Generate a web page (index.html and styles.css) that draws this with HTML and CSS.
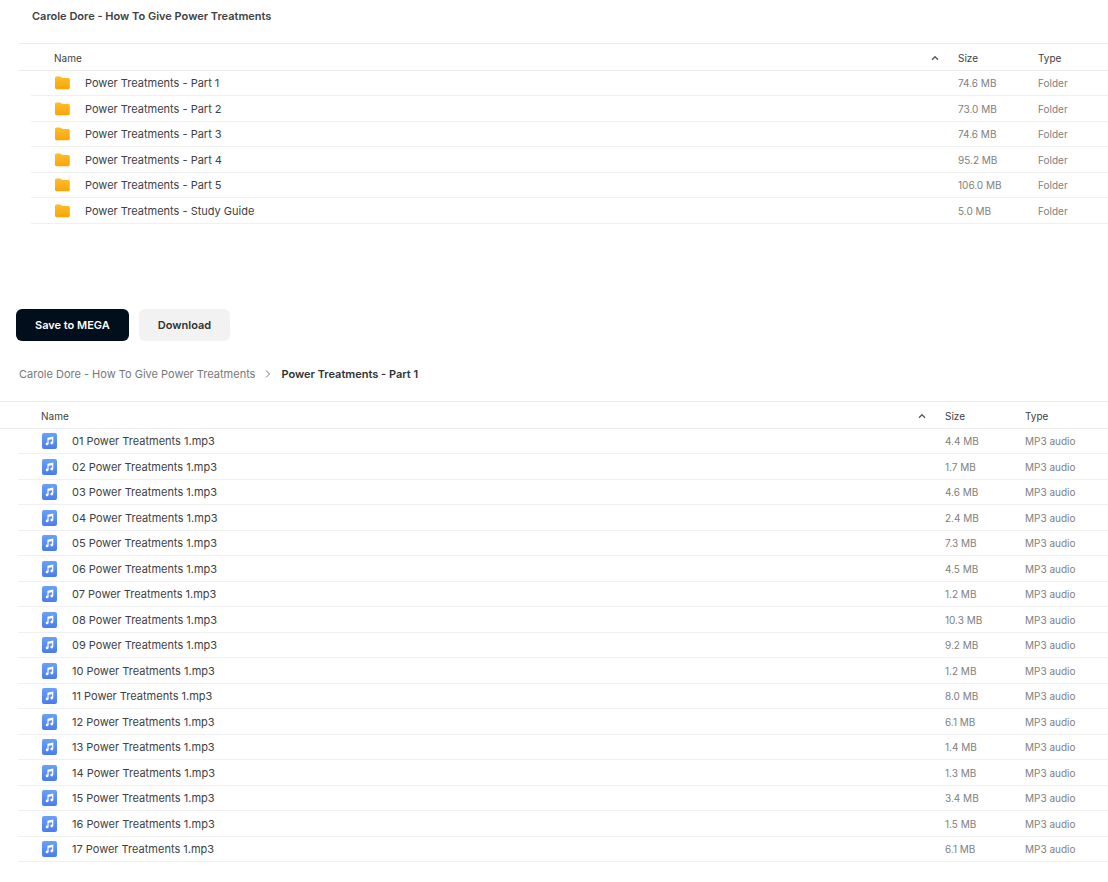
FILE: index.html
```html
<!DOCTYPE html>
<html lang="en">
<head>
    <meta charset="UTF-8">
    <meta name="viewport" content="width=device-width, initial-scale=1.0">
    <title>Carole Dore - How To Give Power Treatments</title>
    <link rel="stylesheet" href="styles.css">
</head>
<body>
    <svg class="sprite" aria-hidden="true">
        <defs>
            <linearGradient id="folder-fill" x1="0" y1="0" x2="0" y2="1">
                <stop offset="0" stop-color="#ffbd2b"/>
                <stop offset="1" stop-color="#fba40b"/>
            </linearGradient>
            <linearGradient id="audio-fill" x1="0" y1="0" x2="0" y2="1">
                <stop offset="0" stop-color="#69a1f6"/>
                <stop offset="1" stop-color="#4a7cec"/>
            </linearGradient>
        </defs>
        <symbol id="folder" viewBox="0 0 16 16">
            <path fill="url(#folder-fill)" d="M0 3.200C0 2.200.7 1.500 1.600 1.500h3.200c.6 0 .9.2 1.300.6l.5.5c.2.2.5.3.8.3h5.800c.9 0 1.600.6 1.600 1.600v8.100c0 .9-.7 1.600-1.600 1.600H1.600C.7 14.200 0 13.500 0 12.600z"/>
        </symbol>
        <symbol id="audio" viewBox="0 0 16 16">
            <rect width="15" height="16" rx="2" fill="url(#audio-fill)"/>
            <path fill="none" stroke="#fff" stroke-width="1.200" d="M6 10.800V5.200l4.700-1v5.700M6 6.300l4.700-1"/>
            <circle cx="5.100" cy="10.900" r="1.400" fill="#fff"/>
            <circle cx="9.800" cy="10" r="1.400" fill="#fff"/>
        </symbol>
        <symbol id="sort" viewBox="0 0 8 8">
            <path fill="none" stroke="#555" stroke-width="1.300" d="M1 5.700 4 2.700 7 5.700"/>
        </symbol>
    </svg>

    <section class="folder-view root-folder">
        <h1 class="folder-title">Carole Dore - How To Give Power Treatments</h1>
        <table class="file-list">
            <thead>
                <tr>
                    <th scope="col"><div class="name-head">Name <svg class="sort"><use href="#sort"/></svg></div></th>
                    <th scope="col" class="size">Size</th>
                    <th scope="col" class="type">Type</th>
                </tr>
            </thead>
            <tbody>
                <tr><td><div class="item"><svg class="icon"><use href="#folder"/></svg>Power Treatments - Part 1</div></td><td>74.6 MB</td><td>Folder</td></tr>
                <tr><td><div class="item"><svg class="icon"><use href="#folder"/></svg>Power Treatments - Part 2</div></td><td>73.0 MB</td><td>Folder</td></tr>
                <tr><td><div class="item"><svg class="icon"><use href="#folder"/></svg>Power Treatments - Part 3</div></td><td>74.6 MB</td><td>Folder</td></tr>
                <tr><td><div class="item"><svg class="icon"><use href="#folder"/></svg>Power Treatments - Part 4</div></td><td>95.2 MB</td><td>Folder</td></tr>
                <tr><td><div class="item"><svg class="icon"><use href="#folder"/></svg>Power Treatments - Part 5</div></td><td>106.0 MB</td><td>Folder</td></tr>
                <tr><td><div class="item"><svg class="icon"><use href="#folder"/></svg>Power Treatments - Study Guide</div></td><td>5.0 MB</td><td>Folder</td></tr>
            </tbody>
        </table>
    </section>

    <section class="folder-view sub-folder">
        <div class="actions">
            <button type="button" class="btn btn-primary">Save to MEGA</button>
            <button type="button" class="btn">Download</button>
        </div>
        <nav class="breadcrumb">
            <a href="#">Carole Dore - How To Give Power Treatments</a>
            <svg class="chevron" viewBox="0 0 8 8"><path fill="none" stroke="#777" d="M2 .5 5.500 4 2 7.500"/></svg>
            <span class="current">Power Treatments - Part 1</span>
        </nav>
        <table class="file-list">
            <thead>
                <tr>
                    <th scope="col"><div class="name-head">Name <svg class="sort"><use href="#sort"/></svg></div></th>
                    <th scope="col" class="size">Size</th>
                    <th scope="col" class="type">Type</th>
                </tr>
            </thead>
            <tbody>
                <tr><td><div class="item"><svg class="icon"><use href="#audio"/></svg>01 Power Treatments 1.mp3</div></td><td>4.4 MB</td><td>MP3 audio</td></tr>
                <tr><td><div class="item"><svg class="icon"><use href="#audio"/></svg>02 Power Treatments 1.mp3</div></td><td>1.7 MB</td><td>MP3 audio</td></tr>
                <tr><td><div class="item"><svg class="icon"><use href="#audio"/></svg>03 Power Treatments 1.mp3</div></td><td>4.6 MB</td><td>MP3 audio</td></tr>
                <tr><td><div class="item"><svg class="icon"><use href="#audio"/></svg>04 Power Treatments 1.mp3</div></td><td>2.4 MB</td><td>MP3 audio</td></tr>
                <tr><td><div class="item"><svg class="icon"><use href="#audio"/></svg>05 Power Treatments 1.mp3</div></td><td>7.3 MB</td><td>MP3 audio</td></tr>
                <tr><td><div class="item"><svg class="icon"><use href="#audio"/></svg>06 Power Treatments 1.mp3</div></td><td>4.5 MB</td><td>MP3 audio</td></tr>
                <tr><td><div class="item"><svg class="icon"><use href="#audio"/></svg>07 Power Treatments 1.mp3</div></td><td>1.2 MB</td><td>MP3 audio</td></tr>
                <tr><td><div class="item"><svg class="icon"><use href="#audio"/></svg>08 Power Treatments 1.mp3</div></td><td>10.3 MB</td><td>MP3 audio</td></tr>
                <tr><td><div class="item"><svg class="icon"><use href="#audio"/></svg>09 Power Treatments 1.mp3</div></td><td>9.2 MB</td><td>MP3 audio</td></tr>
                <tr><td><div class="item"><svg class="icon"><use href="#audio"/></svg>10 Power Treatments 1.mp3</div></td><td>1.2 MB</td><td>MP3 audio</td></tr>
                <tr><td><div class="item"><svg class="icon"><use href="#audio"/></svg>11 Power Treatments 1.mp3</div></td><td>8.0 MB</td><td>MP3 audio</td></tr>
                <tr><td><div class="item"><svg class="icon"><use href="#audio"/></svg>12 Power Treatments 1.mp3</div></td><td>6.1 MB</td><td>MP3 audio</td></tr>
                <tr><td><div class="item"><svg class="icon"><use href="#audio"/></svg>13 Power Treatments 1.mp3</div></td><td>1.4 MB</td><td>MP3 audio</td></tr>
                <tr><td><div class="item"><svg class="icon"><use href="#audio"/></svg>14 Power Treatments 1.mp3</div></td><td>1.3 MB</td><td>MP3 audio</td></tr>
                <tr><td><div class="item"><svg class="icon"><use href="#audio"/></svg>15 Power Treatments 1.mp3</div></td><td>3.4 MB</td><td>MP3 audio</td></tr>
                <tr><td><div class="item"><svg class="icon"><use href="#audio"/></svg>16 Power Treatments 1.mp3</div></td><td>1.5 MB</td><td>MP3 audio</td></tr>
                <tr><td><div class="item"><svg class="icon"><use href="#audio"/></svg>17 Power Treatments 1.mp3</div></td><td>6.1 MB</td><td>MP3 audio</td></tr>
            </tbody>
        </table>
    </section>
</body>
</html>
```
FILE: styles.css
```css
* {
    box-sizing: border-box;
}

body {
    margin: 0;
    background-color: #fff;
    color: #404144;
    font-family: Inter, "Liberation Sans", sans-serif;
    font-size: 11px;
    line-height: 16px;
}

.sprite {
    position: absolute;
    width: 0;
    height: 0;
}

.root-folder {
    --inset: 12px;
    --type-width: 70px;
    padding: 8px 0 0 19px;
}

.sub-folder {
    --inset: 18px;
    --type-width: 83px;
    padding-top: 85px;
}

.folder-title {
    margin: 0 0 19px 13px;
    font-size: 11px;
    font-weight: 600;
}

/* file tables */
.file-list {
    width: 100%;
    table-layout: fixed;
    border-collapse: separate;
    border-spacing: 0;
}

.file-list th {
    height: 28px;
    padding: 2px 0 0;
    border-top: 1px solid #ebebeb;
    border-bottom: 1px solid #ebebeb;
    font-size: 10px;
    font-weight: 400;
    text-align: left;
}

.file-list .size {
    width: 80px;
}

.file-list .type {
    width: var(--type-width);
}

.file-list td {
    padding: 0;
    border-bottom: 1px solid #f0f0f0;
    color: #808080;
    font-size: 10px;
}

.file-list td:first-child {
    border-bottom: 0;
}

.name-head {
    display: flex;
    align-items: center;
    justify-content: space-between;
    margin-left: var(--inset);
    padding: 0 19px 0 23px;
}

.sort {
    width: 8px;
    height: 8px;
}

.item {
    display: flex;
    align-items: center;
    gap: 14px;
    height: 25px;
    margin-left: var(--inset);
    padding-left: 24px;
    border-bottom: 1px solid #f0f0f0;
    color: #404144;
    font-size: 11px;
}

tr:nth-child(even) .item {
    height: 26px;
}

.icon {
    width: 16px;
    height: 16px;
}

/* buttons and path */
.actions {
    display: flex;
    gap: 10px;
    padding-left: 16px;
}

.btn {
    height: 32px;
    padding: 0 19px;
    border: 0;
    border-radius: 6px;
    background-color: #f2f2f2;
    color: #303233;
    font-family: inherit;
    font-size: 11px;
    font-weight: 600;
    cursor: pointer;
}

.btn-primary {
    background-color: #010e1b;
    color: #fff;
}

.breadcrumb {
    display: flex;
    align-items: center;
    gap: 9px;
    padding: 25px 0 19px 19px;
}

.breadcrumb a {
    color: #777;
    text-decoration: none;
}

.chevron {
    width: 8px;
    height: 8px;
}

.current {
    color: #303233;
    font-weight: 600;
}
```
